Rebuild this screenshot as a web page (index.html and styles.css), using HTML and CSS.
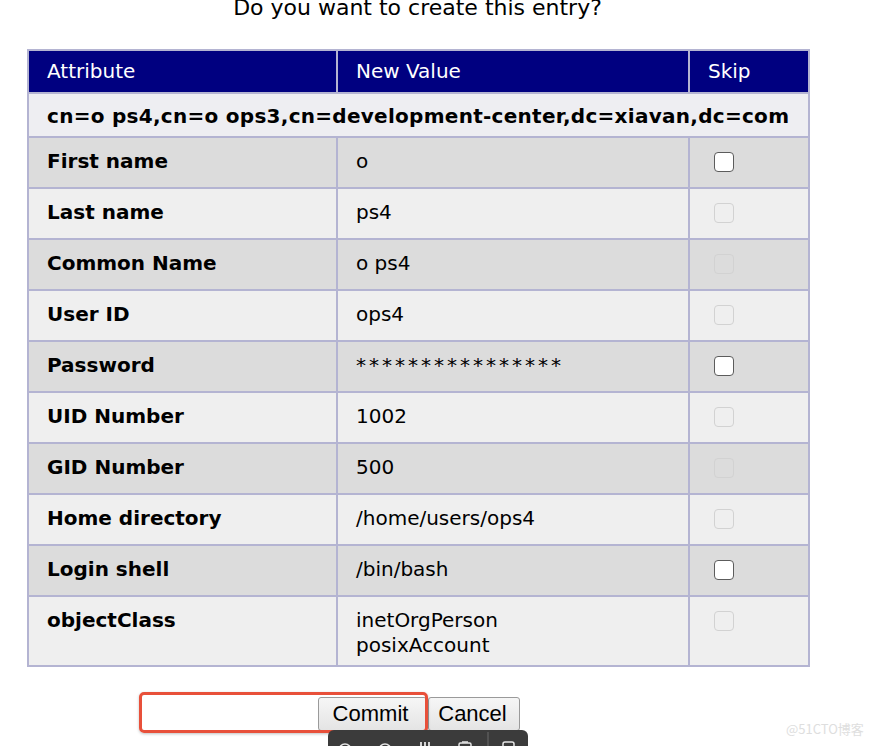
FILE: index.html
```html
<!DOCTYPE html>
<html>
<head>
<meta charset="utf-8">
<link rel="stylesheet" href="styles.css">
</head>
<body>
<div class="page">
  <h3 class="title">Do you want to create this entry?</h3>
  <table class="entry">
    <thead>
      <tr><th class="c1">Attribute</th><th class="c2">New Value</th><th class="c3">Skip</th></tr>
    </thead>
    <tbody>
      <tr class="dn"><td colspan="3">cn=o ps4,cn=o ops3,cn=development-center,dc=xiavan,dc=com</td></tr>
      <tr class="dark"><td class="name">First name</td><td>o</td><td><span class="cb"></span></td></tr>
      <tr class="light"><td class="name">Last name</td><td>ps4</td><td><span class="cb off"></span></td></tr>
      <tr class="dark"><td class="name">Common Name</td><td>o ps4</td><td><span class="cb off"></span></td></tr>
      <tr class="light"><td class="name">User ID</td><td>ops4</td><td><span class="cb off"></span></td></tr>
      <tr class="dark"><td class="name">Password</td><td class="pw">****************</td><td><span class="cb"></span></td></tr>
      <tr class="light"><td class="name">UID Number</td><td>1002</td><td><span class="cb off"></span></td></tr>
      <tr class="dark"><td class="name">GID Number</td><td>500</td><td><span class="cb off"></span></td></tr>
      <tr class="light"><td class="name">Home directory</td><td>/home/users/ops4</td><td><span class="cb off"></span></td></tr>
      <tr class="dark"><td class="name">Login shell</td><td>/bin/bash</td><td><span class="cb"></span></td></tr>
      <tr class="light multi"><td class="name">objectClass</td><td>inetOrgPerson<br>posixAccount</td><td><span class="cb off"></span></td></tr>
    </tbody>
  </table>
  <div class="actions">
    <span class="spacer"></span>
    <button class="btn commit">Commit</button><button class="btn cancel">Cancel</button>
  </div>
</div>
<div class="annot"></div>
<div class="toolbar">
  <svg width="200" height="16" viewBox="0 0 200 16">
    <circle cx="17" cy="20" r="6" fill="none" stroke="#e6e6e6" stroke-width="1.6"/>
    <circle cx="57" cy="20" r="6" fill="none" stroke="#e6e6e6" stroke-width="1.6"/>
    <path d="M93 12 v5 M97 12 v5 M101 12 v5" stroke="#e6e6e6" stroke-width="1.8"/>
    <rect x="131" y="13" width="12" height="10" rx="1.5" fill="none" stroke="#e6e6e6" stroke-width="1.5"/>
    <path d="M134 12 h6" stroke="#e6e6e6" stroke-width="1.5"/>
    <path d="M160 2 v14" stroke="#6a6a6a" stroke-width="1"/>
    <rect x="175" y="12" width="11" height="10" rx="2" fill="none" stroke="#e6e6e6" stroke-width="1.5"/>
  </svg>
</div>
<div class="watermark">@51CTO博客</div>
</body>
</html>
```

FILE: styles.css
```css
html, body {
  margin: 0;
  padding: 0;
  background: #ffffff;
}
body {
  font-family: "DejaVu Sans", Verdana, sans-serif;
  color: #000;
  position: relative;
  height: 746px;
  overflow: hidden;
}
.page {
  padding-left: 27px;
  width: 781px;
}
.title {
  margin: -6px 0 0 0;
  height: 55px;
  font-size: 22px;
  font-weight: normal;
  line-height: 28px;
  text-align: center;
}
.entry {
  width: 781px;
  border-collapse: collapse;
  border: 2px solid #aeaecb;
  font-size: 20px;
  table-layout: fixed;
}
.entry th, .entry td {
  border: 2px solid #b4b4d2;
  text-align: left;
  vertical-align: top;
  padding: 0 17px 0 18px;
}
.entry th {
  background: #000080;
  color: #fff;
  font-weight: normal;
  height: 41px;
  line-height: 41px;
  padding-top: 0;
}
.c1 { width: 272px; }
.c2 { width: 315px; }
.c3 { width: 83px; }
.entry td {
  height: 37px;
  padding-top: 11px;
  padding-bottom: 1px;
  line-height: 25px;
}
.dn td {
  background: #eeeef2;
  font-weight: bold;
  letter-spacing: 0.28px;
  height: 31px;
  padding-top: 10px;
  padding-bottom: 1px;
}
.dark td { background: #dcdcdc; }
.light td { background: #efefef; }
.name { font-weight: bold; }
.pw { letter-spacing: 3px; }
.multi td {
  height: 57px;
  padding-bottom: 0;
}
.cb {
  display: inline-block;
  width: 18px;
  height: 18px;
  margin: 3px 0 0 6px;
  border: 1.5px solid #5c5c5c;
  border-radius: 4px;
  background: #ffffff;
  vertical-align: top;
}
.cb.off {
  border-color: #d2d2d2;
  background: transparent;
}
.actions {
  display: flex;
  margin-top: 30px;
  padding-left: 112px;
  height: 34px;
}
.spacer {
  width: 179px;
}
.btn {
  font-family: "Liberation Sans", Arial, sans-serif;
  font-size: 22px;
  height: 34px;
  padding: 0;
  border: 1px solid #9a9a9a;
  border-radius: 3px;
  background: linear-gradient(#f6f6f6, #e4e4e4);
  color: #000;
}
.commit { width: 109px; padding-right: 4px; }
.cancel { width: 92px; margin-left: 1px; padding-right: 3px; }
.annot {
  position: absolute;
  left: 139px;
  top: 692px;
  width: 283px;
  height: 35px;
  border: 3px solid #e8503a;
  border-radius: 5px;
  box-shadow: 0 1px 3px rgba(0,0,0,0.25);
}
.toolbar {
  position: absolute;
  left: 328px;
  top: 730px;
  width: 200px;
  height: 22px;
  background: #3b3b3b;
  border-radius: 6px 6px 0 0;
}
.toolbar svg { display: block; }
.watermark {
  position: absolute;
  left: 786px;
  top: 719px;
  font-family: "Noto Sans CJK SC", "DejaVu Sans", sans-serif;
  font-size: 13px;
  color: #dedede;
}
```
